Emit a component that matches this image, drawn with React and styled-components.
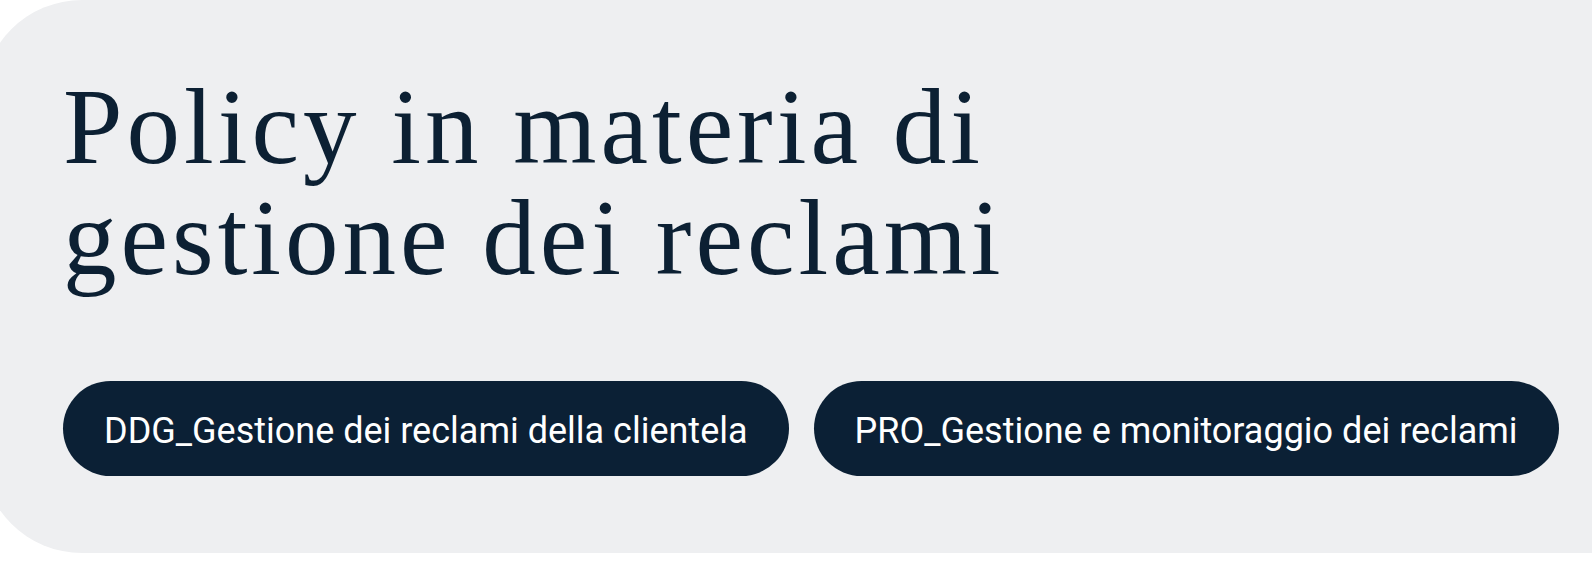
import React from "react";
import styled, { createGlobalStyle } from "styled-components";

const GlobalStyle = createGlobalStyle`
  html, body {
    margin: 0;
    padding: 0;
    background: #ffffff;
    overflow-x: hidden;
  }
`;

const Hero = styled.section`
  box-sizing: border-box;
  height: 553px;
  margin-left: -18px;
  padding: 72px 0 0 81px;
  background: #eeeff1;
  border-radius: 100px 0 0 100px;
  display: flex;
  flex-direction: column;
`;

const Title = styled.h1`
  margin: 0;
  max-width: 1120px;
  font-family: "Liberation Serif", "Times New Roman", serif;
  font-weight: 400;
  font-size: 107px;
  line-height: 111px;
  letter-spacing: 4px;
  color: #0c2033;
`;

const Actions = styled.div`
  display: flex;
  gap: 25px;
  margin-top: 87px;
`;

const DocButton = styled.a`
  box-sizing: border-box;
  display: inline-flex;
  align-items: center;
  height: 95px;
  padding: 5px 41px 0;
  border-radius: 48px;
  background: #0b2035;
  color: #ffffff;
  font-family: Roboto, "Liberation Sans", sans-serif;
  font-size: 36px;
  text-decoration: none;
  white-space: nowrap;
  cursor: pointer;
`;

const documents = [
  "DDG_Gestione dei reclami della clientela",
  "PRO_Gestione e monitoraggio dei reclami",
];

const App = () => (
  <>
    <GlobalStyle />
    <Hero>
      <Title>Policy in materia di gestione dei reclami</Title>
      <Actions>
        {documents.map((doc) => (
          <DocButton key={doc} href="#">
            {doc}
          </DocButton>
        ))}
      </Actions>
    </Hero>
  </>
);

export default App;
